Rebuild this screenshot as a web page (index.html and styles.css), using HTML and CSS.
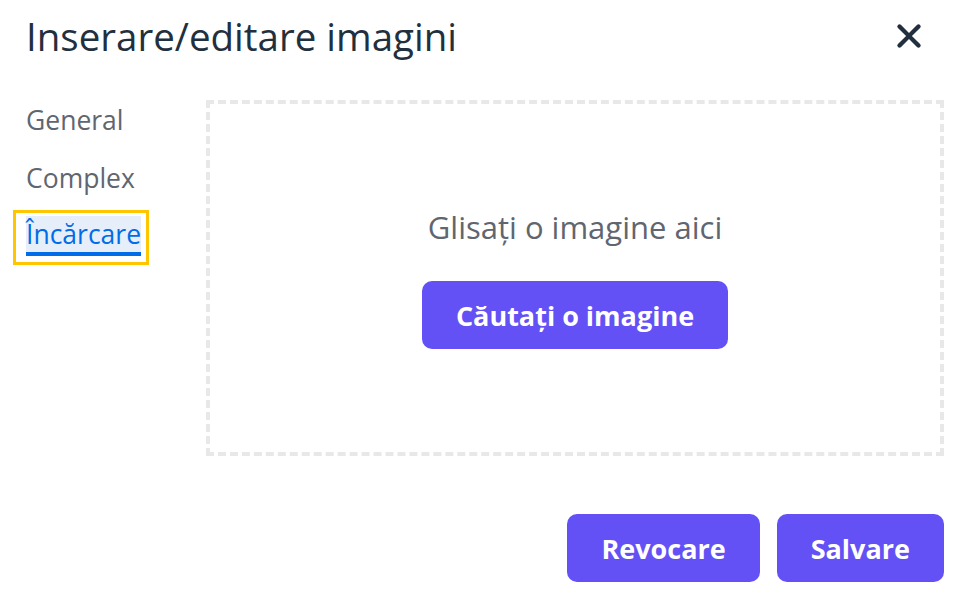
FILE: index.html
```html
<!DOCTYPE html>
<html>
<head>
    <meta charset="utf-8">
    <title>Inserare/editare imagini</title>
    <link rel="stylesheet" href="styles.css">
</head>
<body>
    <div class="dialog">
        <div class="dialog-header">
            <h1 class="dialog-title">Inserare/editare imagini</h1>
            <button class="close-btn" aria-label="Închide">
                <svg width="50" height="50" viewBox="0 0 24 24"><path d="M17.3 8.2L13.4 12l3.9 3.8a1 1 0 0 1-1.5 1.5L12 13.4l-3.8 3.9a1 1 0 0 1-1.5-1.5l3.9-3.8-3.9-3.8a1 1 0 0 1 1.5-1.5l3.8 3.9 3.8-3.9a1 1 0 0 1 1.5 1.5z" fill="#222f3e"/></svg>
            </button>
        </div>
        <div class="dialog-body">
            <div class="tabs">
                <div class="tab"><span>General</span></div>
                <div class="tab"><span>Complex</span></div>
                <div class="tab active"><span>Încărcare</span></div>
            </div>
            <div class="panel">
                <div class="dropzone">
                    <p class="drop-text">Glisați o imagine aici</p>
                    <button class="btn">Căutați o imagine</button>
                </div>
            </div>
        </div>
        <div class="dialog-footer">
            <button class="btn">Revocare</button>
            <button class="btn">Salvare</button>
        </div>
    </div>
</body>
</html>
```

FILE: styles.css
```css
body {
    margin: 0;
    background-color: #fff;
    font-family: "Open Sans", "Noto Sans", sans-serif;
    color: #222f3e;
}
.dialog {
    width: 960px;
    height: 591px;
    padding: 0 16px 0 13px;
    box-sizing: border-box;
}
.dialog-header {
    display: flex;
    justify-content: space-between;
    align-items: center;
    height: 94px;
    padding: 0 10px 22px 13px;
    box-sizing: border-box;
}
.dialog-title {
    margin: 0;
    font-size: 38.5px;
    font-weight: 400;
    line-height: 1;
    color: #222f3e;
}
.close-btn {
    border: 0;
    background: none;
    padding: 0;
    width: 50px;
    height: 50px;
    cursor: pointer;
}
.close-btn svg {
    display: block;
}
.dialog-body {
    display: flex;
    height: 362px;
}
.tabs {
    width: 193px;
    flex-shrink: 0;
    display: flex;
    flex-direction: column;
    align-items: flex-start;
    gap: 3px;
    padding-top: 2px;
}
.tab {
    height: 55px;
    box-sizing: border-box;
    border: 3px solid transparent;
    padding: 3px 5px 0 10px;
    font-size: 26.5px;
    color: #5f6670;
}
.tab.active {
    margin-top: -2px;
}
.tab span {
    display: inline-block;
    line-height: 36px;
    border-bottom: 4px solid transparent;
}
.tab.active {
    border-color: #ffc600;
}
.tab.active span {
    color: #006ce7;
    background-color: #e6eefa;
    border-bottom-color: #006ce7;
}
.panel {
    flex: 1;
    padding-top: 6px;
}
.dropzone {
    height: 356px;
    box-sizing: border-box;
    border: 4px dashed #e8e8e8;
    display: flex;
    flex-direction: column;
    align-items: center;
    justify-content: center;
    padding-bottom: 1px;
}
.drop-text {
    margin: 0 0 33px 0;
    font-size: 31px;
    color: #5f6670;
}
.btn {
    height: 68px;
    padding: 0 34px;
    border: 0;
    border-radius: 10px;
    background-color: #6351f5;
    color: #fff;
    font-family: "Open Sans", "Noto Sans", sans-serif;
    font-size: 27px;
    font-weight: 700;
    cursor: pointer;
}
.dialog-footer {
    display: flex;
    justify-content: flex-end;
    gap: 17px;
    padding-top: 58px;
}
```
